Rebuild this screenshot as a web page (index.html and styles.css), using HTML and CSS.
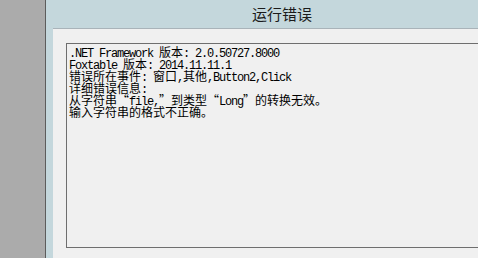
FILE: index.html
```html
<!DOCTYPE html>
<html lang="zh-CN">
<head>
  <meta charset="UTF-8">
  <title>运行错误</title>
  <link rel="stylesheet" href="styles.css">
</head>
<body>
  <div class="desk"></div>

  <div class="window">
    <div class="title-bar">运行错误</div>

    <div class="client">
      <div class="error-box">
        <div class="line">.NET Framework <span class="cn">版本</span>: 2.0.50727.8000</div>
        <div class="line">Foxtable <span class="cn">版本</span>: 2014.11.11.1</div>
        <div class="line"><span class="cn">错误所在事件</span>: <span class="cn">窗口</span>,<span class="cn">其他</span>,Button2,Click</div>
        <div class="line"><span class="cn">详细错误信息</span>:</div>
        <div class="line"><span class="cn">从字符串“</span>file,<span class="cn">”到类型“</span>Long<span class="cn">”的转换无效。</span></div>
        <div class="line"><span class="cn">输入字符串的格式不正确。</span></div>
      </div>
    </div>
  </div>
</body>
</html>
```

FILE: styles.css
```css
/* 背景とウィンドウ */
body {
  margin: 0;
  height: 258px;
  overflow: hidden;
  display: flex;
  background: #ababab;
}

.desk {
  width: 45px;
  flex: none;
}

.window {
  flex: none;
  width: 472px;
  border-left: 1px solid #5c5c5c;
  background: #c4d7dc;
  display: flex;
  flex-direction: column;
  overflow: hidden;
}

.title-bar {
  height: 28px;
  line-height: 27px;
  text-align: center;
  font-family: "Noto Sans CJK SC", sans-serif;
  font-size: 15px;
  color: #1a1a1a;
}

.client {
  flex: 1;
  margin-left: 7px;
  border-top: 1px solid #a9b3b9;
  background: #f0f0f0;
  padding: 14px 0 0 13px;
}

/* エラーメッセージ欄 */
.error-box {
  box-sizing: border-box;
  height: 205px;
  width: 520px;
  border: 1px solid #6e6e6e;
  padding: 2px 2px;
  font-family: "Liberation Mono", monospace;
  font-size: 12px;
  letter-spacing: -1.2px;
  line-height: 12px;
  color: #000;
}

.line {
  height: 12px;
  white-space: pre;
}

.cn {
  font-family: "Noto Sans CJK SC", sans-serif;
  font-size: 12px;
  letter-spacing: 0;
}
```
